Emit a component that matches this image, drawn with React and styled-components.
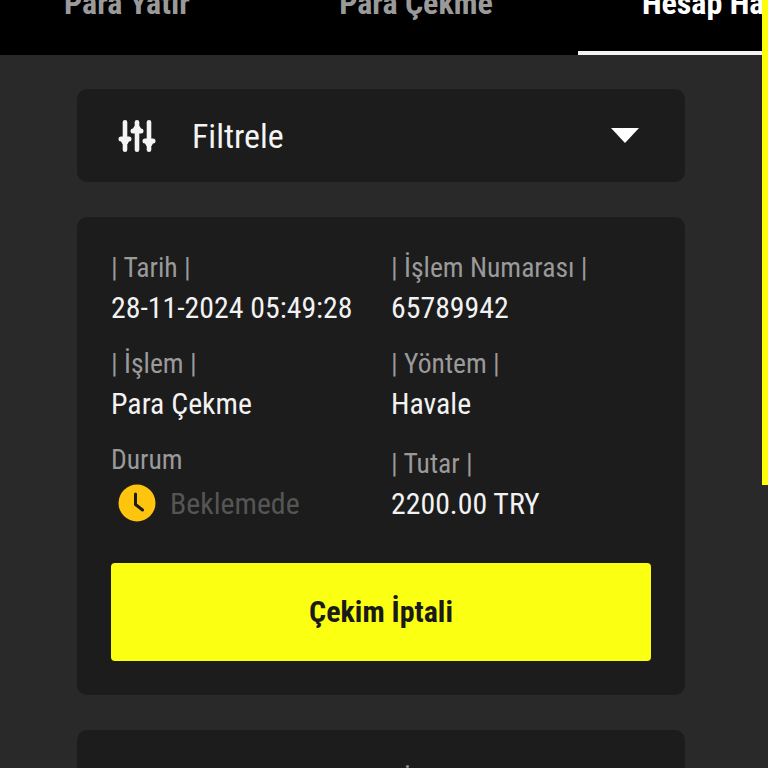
import React from "react";
import styled, { createGlobalStyle } from "styled-components";

const Global = createGlobalStyle`
  html, body { margin: 0; padding: 0; background: #292929; }
  body { font-family: Roboto, "Liberation Sans", sans-serif; font-stretch: 75%; overflow: hidden; }
  * { box-sizing: border-box; }
`;
const Page = styled.div`
  position: relative;
  width: 768px;
  height: 768px;
  overflow: hidden;
  background: #292929;
  padding-right: 6px;
`;
const ScrollThumb = styled.div`
  position: absolute;
  top: 0;
  right: 0;
  width: 6px;
  height: 485px;
  background: #ffff0a;
`;
const TabBar = styled.nav`
  display: flex;
  gap: 35px;
  height: 55px;
  background: #000;
  overflow: hidden;
`;
const Tab = styled.div`
  flex: 0 0 ${p => (p.$active ? 358 : 254)}px;
  height: 55px;
  text-align: center;
  font-size: 32px;
  font-weight: 700;
  line-height: 32px;
  color: ${p => (p.$active ? "#fff" : "#9a9a9a")};
  border-bottom: 4px solid ${p => (p.$active ? "#f2f2f2" : "transparent")};
  white-space: nowrap;
`;
const TabLabel = styled.span`
  display: block;
  margin-top: -13px;
`;
const Content = styled.main`
  display: flex;
  flex-direction: column;
  gap: 35px;
  padding: 34px 77px 0;
`;
const FilterBar = styled.div`
  display: flex;
  align-items: center;
  height: 93px;
  padding: 0 46px 0 41px;
  background: #1c1c1c;
  border-radius: 10px;
  color: #fff;
`;
const FilterLabel = styled.span`
  flex: 1;
  margin-left: 36px;
  font-size: 34px;
  color: #f4f4f4;
`;
const Caret = styled.span`
  width: 0;
  height: 0;
  border-left: 14px solid transparent;
  border-right: 14px solid transparent;
  border-top: 15px solid #fff;
`;
const Card = styled.section`
  background: #1c1c1c;
  border-radius: 10px;
  padding: 35px 34px;
  height: ${p => p.$h}px;
  flex: none;
`;
const Grid = styled.div`
  display: grid;
  grid-template-columns: 280px 1fr;
`;
const Field = styled.div`
  display: flex;
  flex-direction: column;
  height: 96px;
  padding-top: ${p => p.$pt || 0}px;
`;
const Label = styled.span`
  font-size: 27.6px;
  line-height: 32px;
  color: #9a9a9a;
`;
const Value = styled.span`
  font-size: 29.8px;
  line-height: 34px;
  margin-top: 7px;
  color: #f2f2f2;
  white-space: nowrap;
`;
const StatusRow = styled.div`
  display: flex;
  align-items: center;
  gap: 14px;
  margin-top: 8px;
  padding-left: 7px;
`;
const StatusText = styled.span`
  font-size: 29.8px;
  line-height: 34px;
  padding-top: 2px;
  color: #555;
`;
const CancelButton = styled.button`
  display: block;
  width: 540px;
  height: 98px;
  margin-top: 23px;
  padding: 0 0 2px;
  border: 0;
  border-radius: 4px;
  background: #fbff12;
  color: #1a1a1a;
  font-family: inherit;
  font-stretch: inherit;
  font-size: 30px;
  font-weight: 700;
`;

const SlidersIcon = () => (
  <svg width="38" height="34" viewBox="0 0 38 34" fill="#f4f4f4" aria-hidden="true">
    <rect x="4.7" y="1" width="4.6" height="32" rx="2.3" />
    <rect x="16.7" y="1" width="4.6" height="32" rx="2.3" />
    <rect x="28.7" y="1" width="4.6" height="32" rx="2.3" />
    <path d="M0.5 20 q0-2.5 2.5-2.5 h8 q2.5 0 2.5 2.5 q0 2.5-2.5 2.5 L9.5 25 H4.5 L3 22.5 q-2.5 0-2.5-2.5z" />
    <path d="M12.5 12 q0-2.5 2.5-2.5 l1.5-2.5 h5 l1.5 2.5 q2.5 0 2.5 2.5 q0 2.5-2.5 2.5 h-8 q-2.5 0-2.5-2.5z" />
    <path d="M24.5 22 q0-2.5 2.5-2.5 h8 q2.5 0 2.5 2.5 q0 2.5-2.5 2.5 L33.5 27 H28.5 L27 24.5 q-2.5 0-2.5-2.5z" />
  </svg>
);
const ClockIcon = () => (
  <svg width="38" height="38" viewBox="0 0 38 38" aria-hidden="true">
    <circle cx="19" cy="19" r="18.5" fill="#ffc40d" />
    <path d="M17.5 10 V20.5 L24.5 26" fill="none" stroke="#1c1c1c" strokeWidth="3" strokeLinecap="round" strokeLinejoin="round" />
  </svg>
);

export default function App() {
  return (
    <Page>
      <Global />
      <TabBar>
        <Tab><TabLabel>Para Yatır</TabLabel></Tab>
        <Tab><TabLabel>Para Çekme</TabLabel></Tab>
        <Tab $active><TabLabel>Hesap Hareketleri</TabLabel></Tab>
      </TabBar>
      <Content>
        <FilterBar>
          <SlidersIcon />
          <FilterLabel>Filtrele</FilterLabel>
          <Caret />
        </FilterBar>
        <Card $h={478}>
          <Grid>
            <Field><Label>| Tarih |</Label><Value>28-11-2024 05:49:28</Value></Field>
            <Field><Label>| İşlem Numarası |</Label><Value>65789942</Value></Field>
            <Field><Label>| İşlem |</Label><Value>Para Çekme</Value></Field>
            <Field><Label>| Yöntem |</Label><Value>Havale</Value></Field>
            <Field>
              <Label>Durum</Label>
              <StatusRow><ClockIcon /><StatusText>Beklemede</StatusText></StatusRow>
            </Field>
            <Field $pt={4}><Label>| Tutar |</Label><Value>2200.00 TRY</Value></Field>
          </Grid>
          <CancelButton>Çekim İptali</CancelButton>
        </Card>
        <Card $h={200}>
          <Grid>
            <Field><Label>| Tarih |</Label></Field>
            <Field><Label>| İşlem Numarası |</Label></Field>
          </Grid>
        </Card>
      </Content>
      <ScrollThumb />
    </Page>
  );
}
